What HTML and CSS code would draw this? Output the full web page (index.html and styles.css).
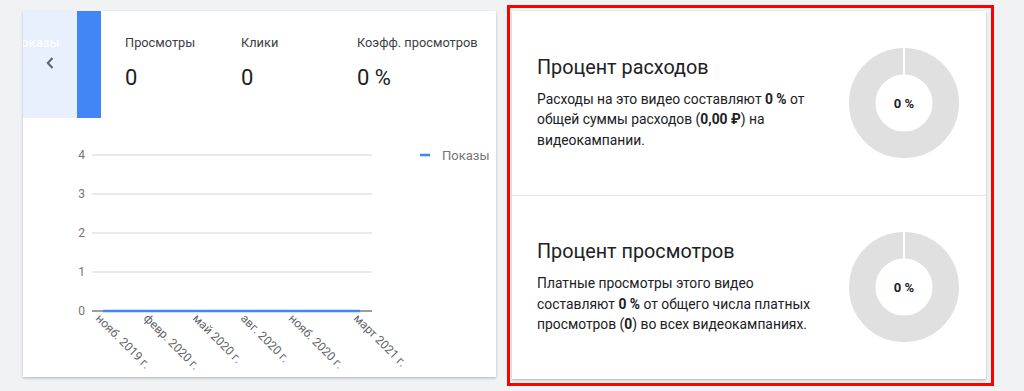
FILE: index.html
```html
<!DOCTYPE html>
<html lang="ru">
<head>
<meta charset="utf-8">
<title>Статистика видео</title>
<link rel="stylesheet" href="styles.css">
</head>
<body>
<div class="page">
  <section class="card stats-card">
    <div class="top">
      <div class="tab-prev">
        <span class="tab-label">Показы</span>
        <svg class="chev" width="8" height="12" viewBox="0 0 8 12"><path d="M6.5 1 L1.8 6 L6.5 11" fill="none" stroke="#5f6368" stroke-width="2"/></svg>
      </div>
      <div class="tab-active"></div>
      <div class="stats">
        <div class="stat"><div class="stat-label">Просмотры</div><div class="stat-value">0</div></div>
        <div class="stat"><div class="stat-label">Клики</div><div class="stat-value">0</div></div>
        <div class="stat"><div class="stat-label">Коэфф. просмотров</div><div class="stat-value">0 %</div></div>
      </div>
    </div>
    <svg class="chart" width="473" height="259" viewBox="0 0 473 259">
      <g stroke="#e3e3e3" stroke-width="1.5">
        <line x1="69" y1="37" x2="349" y2="37"/>
        <line x1="69" y1="76" x2="349" y2="76"/>
        <line x1="69" y1="115" x2="349" y2="115"/>
        <line x1="69" y1="154" x2="349" y2="154"/>
      </g>
      <line x1="69" y1="193" x2="349" y2="193" stroke="#9e9e9e" stroke-width="2"/>
      <line x1="80" y1="193" x2="337" y2="193" stroke="#4285f4" stroke-width="2.5"/>
      <g class="ylab" text-anchor="end">
        <text x="62" y="41">4</text>
        <text x="62" y="80">3</text>
        <text x="62" y="119">2</text>
        <text x="62" y="158">1</text>
        <text x="62" y="197">0</text>
      </g>
      <g class="xlab">
        <text transform="translate(72 201) rotate(45)">нояб. 2019 г.</text>
        <text transform="translate(120 201) rotate(45)">февр. 2020 г.</text>
        <text transform="translate(169 201) rotate(45)">май 2020 г.</text>
        <text transform="translate(217 201) rotate(45)">авг. 2020 г.</text>
        <text transform="translate(265 201) rotate(45)">нояб. 2020 г.</text>
        <text transform="translate(330 201) rotate(45)">март 2021 г.</text>
      </g>
      <line x1="397" y1="37" x2="407" y2="37" stroke="#4285f4" stroke-width="2.5"/>
      <text class="legend" x="419" y="41.5">Показы</text>
    </svg>
  </section>

  <div class="highlight">
    <section class="card share-card">
      <div class="metric">
        <div class="metric-text">
          <h2 class="metric-title">Процент расходов</h2>
          <p class="metric-desc">Расходы на это видео составляют <b>0 %</b> от общей суммы расходов (<b>0,00 ₽</b>) на видеокампании.</p>
        </div>
        <div class="donut">
          <svg width="112" height="112" viewBox="0 0 112 112">
            <circle cx="56" cy="56" r="41.75" fill="none" stroke="#e0e0e0" stroke-width="26.5"/>
            <line x1="56" y1="0" x2="56" y2="29" stroke="#fff" stroke-width="2"/>
          </svg>
          <span class="donut-label">0 %</span>
        </div>
      </div>
      <div class="metric">
        <div class="metric-text">
          <h2 class="metric-title">Процент просмотров</h2>
          <p class="metric-desc">Платные просмотры этого видео составляют <b>0 %</b> от общего числа платных просмотров (<b>0</b>) во всех видеокампаниях.</p>
        </div>
        <div class="donut">
          <svg width="112" height="112" viewBox="0 0 112 112">
            <circle cx="56" cy="56" r="41.75" fill="none" stroke="#e0e0e0" stroke-width="26.5"/>
            <line x1="56" y1="0" x2="56" y2="29" stroke="#fff" stroke-width="2"/>
          </svg>
          <span class="donut-label">0 %</span>
        </div>
      </div>
    </section>
  </div>
</div>
</body>
</html>
```

FILE: styles.css
```css
* { box-sizing: border-box; }

html, body {
  margin: 0;
  padding: 0;
  background: #f1f2f4;
  font-family: Roboto, "Noto Sans", Arial, sans-serif;
  color: #202124;
}

.page {
  display: flex;
  align-items: flex-start;
  gap: 11px;
  padding-left: 23px;
  width: 1024px;
  height: 391px;
  overflow: hidden;
}

.card {
  background: #fff;
  box-shadow: 0 1px 2px rgba(0,0,0,0.18), 0 2px 4px rgba(0,0,0,0.08);
}

/* ---- left card ---- */
.stats-card {
  margin-top: 11px;
  width: 473px;
  height: 366px;
  overflow: hidden;
  display: flex;
  flex-direction: column;
}

.top {
  display: flex;
  height: 107px;
  flex: none;
}

.tab-prev {
  width: 54px;
  background: #e8f0fe;
}

.tab-label {
  display: block;
  margin-left: -11px;
  padding-top: 24px;
  font-size: 13px;
  line-height: 16px;
  color: #ffffff;
  white-space: nowrap;
}

.chev {
  display: block;
  margin: 6px 0 0 23px;
}

.tab-active {
  width: 24px;
  background: #4285f4;
}

.stats {
  display: flex;
  padding-left: 24px;
  padding-top: 24px;
}

.stat {
  width: 116px;
}

.stat:last-child { width: auto; }

.stat-label {
  font-size: 12.8px;
  line-height: 16px;
  color: #3c4043;
  white-space: nowrap;
}

.stat-value {
  margin-top: 13px;
  font-size: 22px;
  line-height: 28px;
  color: #202124;
}

.chart {
  display: block;
  flex: none;
}

.ylab text {
  font-size: 12px;
  fill: #757575;
}

.xlab text {
  font-size: 12px;
  fill: #5f6368;
}

.legend {
  font-size: 13px;
  fill: #757575;
}

/* ---- right card ---- */
.highlight {
  margin-top: 5px;
  border: 3px solid #ff0000;
  padding: 3px 5px 4px 2px;
}

.share-card {
  width: 474px;
  height: 368px;
  display: flex;
  flex-direction: column;
}

.metric {
  flex: 1;
  display: flex;
  align-items: center;
  justify-content: space-between;
  padding-left: 25px;
  padding-right: 26px;
}

.metric + .metric {
  border-top: 1px solid #e6e6e6;
}

.metric-text {
  width: 282px;
}

.metric-title {
  margin: 0;
  font-size: 19.8px;
  line-height: 24px;
  font-weight: 400;
  color: #202124;
}

.metric-desc {
  margin: 9px 0 0;
  font-size: 13.85px;
  line-height: 20.5px;
  color: #202124;
}

.metric-desc b { font-weight: 700; }

.donut {
  position: relative;
  width: 112px;
  height: 112px;
}

.donut svg { display: block; }

.donut-label {
  position: absolute;
  left: 0;
  right: 0;
  top: 50%;
  transform: translateY(-50%);
  text-align: center;
  font-size: 13px;
  font-weight: 700;
  color: #202124;
}
```
